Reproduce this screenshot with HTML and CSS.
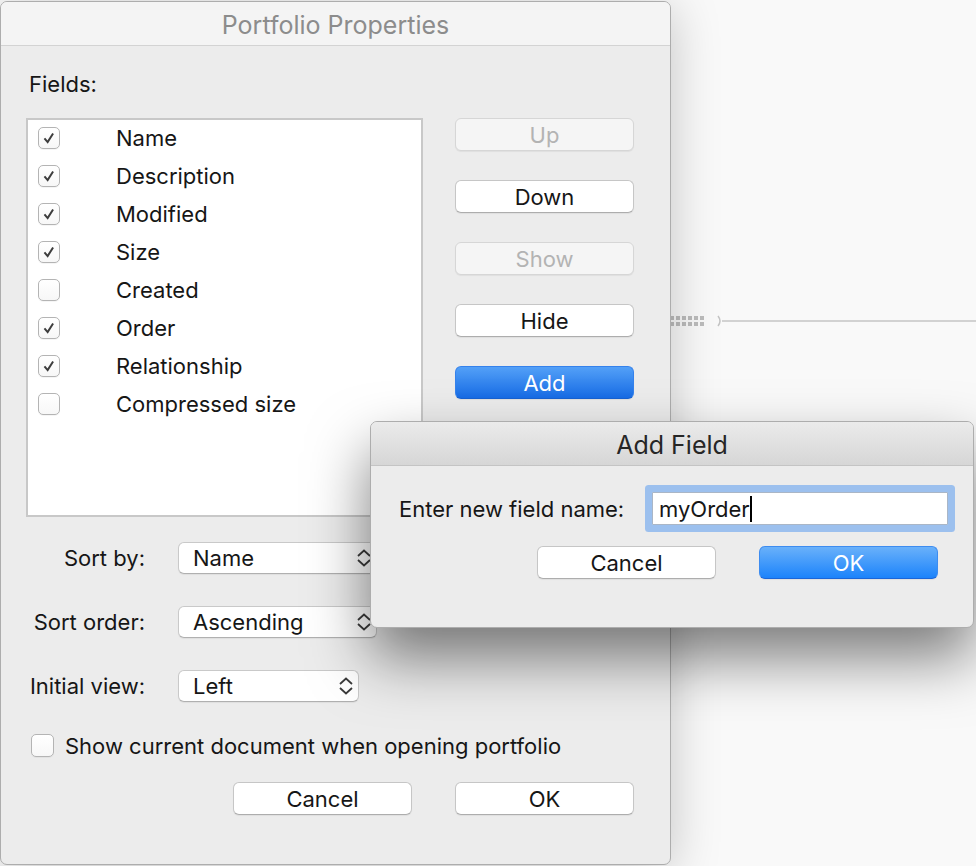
FILE: index.html
```html
<!DOCTYPE html>
<html lang="en">
<head>
    <meta charset="UTF-8">
    <title>Portfolio Properties</title>
    <link rel="stylesheet" href="styles.css">
</head>
<body>
    <div class="desktop">
        <svg class="connector" width="306" height="14" viewBox="0 0 306 14">
            <g fill="#bcbcbc">
                <rect x="0" y="2" width="4" height="4"/><rect x="6" y="2" width="4" height="4"/><rect x="12" y="2" width="4" height="4"/>
                <rect x="18" y="2" width="4" height="4"/><rect x="24" y="2" width="4" height="4"/><rect x="30" y="2" width="4" height="4"/>
                <rect x="0" y="8" width="4" height="4"/><rect x="6" y="8" width="4" height="4"/><rect x="12" y="8" width="4" height="4"/>
                <rect x="18" y="8" width="4" height="4"/><rect x="24" y="8" width="4" height="4"/><rect x="30" y="8" width="4" height="4"/>
            </g>
            <path d="M48 2 Q52 7 48 12" fill="none" stroke="#c4c4c4" stroke-width="1.5"/>
            <line x1="52" y1="7" x2="306" y2="7" stroke="#c4c4c4" stroke-width="1.5"/>
        </svg>

        <div class="window props">
            <div class="titlebar inactive">Portfolio Properties</div>
            <div class="content">
                <div class="fields-label">Fields:</div>

                <div class="fields-row">
                    <div class="field-list">
                        <div class="field-item"><span class="check on"><svg viewBox="0 0 22 22"><path d="M6 11.5 L9.5 15.5 L15.5 6"/></svg></span><span class="field-name">Name</span></div>
                        <div class="field-item"><span class="check on"><svg viewBox="0 0 22 22"><path d="M6 11.5 L9.5 15.5 L15.5 6"/></svg></span><span class="field-name">Description</span></div>
                        <div class="field-item"><span class="check on"><svg viewBox="0 0 22 22"><path d="M6 11.5 L9.5 15.5 L15.5 6"/></svg></span><span class="field-name">Modified</span></div>
                        <div class="field-item"><span class="check on"><svg viewBox="0 0 22 22"><path d="M6 11.5 L9.5 15.5 L15.5 6"/></svg></span><span class="field-name">Size</span></div>
                        <div class="field-item"><span class="check"></span><span class="field-name">Created</span></div>
                        <div class="field-item"><span class="check on"><svg viewBox="0 0 22 22"><path d="M6 11.5 L9.5 15.5 L15.5 6"/></svg></span><span class="field-name">Order</span></div>
                        <div class="field-item"><span class="check on"><svg viewBox="0 0 22 22"><path d="M6 11.5 L9.5 15.5 L15.5 6"/></svg></span><span class="field-name">Relationship</span></div>
                        <div class="field-item"><span class="check"></span><span class="field-name">Compressed size</span></div>
                    </div>

                    <div class="side-buttons">
                        <div class="btn disabled">Up</div>
                        <div class="btn">Down</div>
                        <div class="btn disabled">Show</div>
                        <div class="btn">Hide</div>
                        <div class="btn default dim">Add</div>
                    </div>
                </div>

                <div class="options">
                    <div class="opt-label">Sort by:</div>
                    <div class="popup wide">Name
                        <svg class="chev" viewBox="0 0 14 22"><path d="M1 9 L7 3.5 L13 9 M1 13 L7 18.5 L13 13"/></svg>
                    </div>
                    <div class="opt-label">Sort order:</div>
                    <div class="popup wide">Ascending
                        <svg class="chev" viewBox="0 0 14 22"><path d="M1 9 L7 3.5 L13 9 M1 13 L7 18.5 L13 13"/></svg>
                    </div>
                    <div class="opt-label">Initial view:</div>
                    <div class="popup narrow">Left
                        <svg class="chev" viewBox="0 0 14 22"><path d="M1 9 L7 3.5 L13 9 M1 13 L7 18.5 L13 13"/></svg>
                    </div>
                </div>

                <div class="check-row">
                    <span class="check big"></span>
                    <span>Show current document when opening portfolio</span>
                </div>

                <div class="actions">
                    <div class="btn">Cancel</div>
                    <div class="btn">OK</div>
                </div>
            </div>
        </div>

        <div class="window sheet">
            <div class="titlebar">Add Field</div>
            <div class="sheet-body">
                <div class="name-row">
                    <span>Enter new field name:</span>
                    <div class="text-field"><span class="typed">myOrder</span></div>
                </div>
                <div class="actions">
                    <div class="btn">Cancel</div>
                    <div class="btn default">OK</div>
                </div>
            </div>
        </div>
    </div>
</body>
</html>
```

FILE: styles.css
```css
body {
    margin: 0;
    background: #f9f9f9;
    font-family: Inter, 'Liberation Sans', sans-serif;
    font-size: 22px;
    color: #161616;
}

.desktop {
    position: relative;
    width: 976px;
    height: 866px;
    overflow: hidden;
}

.connector {
    position: absolute;
    left: 670px;
    top: 314px;
}

.window {
    box-sizing: border-box;
    background: #ececec;
    border: 1px solid #adadad;
    border-radius: 7px;
}

.props {
    position: relative;
    margin-top: 1px;
    width: 671px;
    height: 864px;
    box-shadow: 0 6px 50px rgba(0,0,0,0.22);
}

.titlebar {
    box-sizing: border-box;
    height: 44px;
    padding-top: 3px;
    line-height: 41px;
    text-align: center;
    font-size: 25px;
    color: #262626;
    border-bottom: 1px solid #c4c4c4;
    border-radius: 6px 6px 0 0;
    background: linear-gradient(#ebebeb, #d6d6d6);
}

.titlebar.inactive {
    color: #8c8c8c;
    background: #f4f4f4;
    border-bottom-color: #d3d3d3;
}

.content {
    padding: 0 36px 0 25px;
}

.fields-label {
    margin: 25px 0 0 3px;
    line-height: 26px;
}

.fields-row {
    display: flex;
    margin-top: 21px;
}

.field-list {
    box-sizing: border-box;
    width: 398px;
    height: 399px;
    padding-top: 0;
    background: white;
    border: 2px solid #c8c8c8;
}

.field-item {
    display: flex;
    align-items: center;
    height: 38px;
    margin-top: -1px;
    margin-bottom: 1px;
}

.check {
    box-sizing: border-box;
    width: 22px;
    height: 22px;
    margin-left: 10px;
    border: 1px solid #b4b4b4;
    border-radius: 5px;
    background: linear-gradient(#ffffff, #f7f7f7);
    box-shadow: 0 1px 0 rgba(0,0,0,0.04);
}

.check svg {
    display: block;
    width: 20px;
    height: 20px;
    fill: none;
    stroke: #3d3d3d;
    stroke-width: 2.2;
}

.field-name {
    margin-left: 56px;
}

.side-buttons {
    display: flex;
    flex-direction: column;
    gap: 29px;
    margin-left: 32px;
}

.btn {
    box-sizing: border-box;
    width: 179px;
    height: 33px;
    line-height: 33px;
    text-align: center;
    background: white;
    border: 1px solid #c6c6c6;
    border-bottom-color: #adadad;
    border-radius: 6px;
    box-shadow: 0 1px 1px rgba(0,0,0,0.06);
}

.btn.disabled {
    background: #f5f5f5;
    border-color: #d6d6d6;
    color: #b3b3b3;
}

.btn.default {
    color: white;
    border-color: #3d8cf0;
    border-bottom-color: #1b66d8;
    background: linear-gradient(#69b1fa, #1c83fb);
}

.btn.default.dim {
    border-color: #3582ec;
    border-bottom-color: #1762d3;
    background: linear-gradient(#53a0f7, #176ce6);
}

.options {
    display: grid;
    grid-template-columns: 119px auto;
    justify-content: start;
    align-items: center;
    column-gap: 33px;
    row-gap: 32px;
    margin-top: 25px;
}

.opt-label {
    text-align: right;
}

.popup {
    box-sizing: border-box;
    display: flex;
    align-items: center;
    justify-content: space-between;
    height: 32px;
    padding: 0 5px 0 14px;
    background: white;
    border: 1px solid #c9c9c9;
    border-bottom-color: #b0b0b0;
    border-radius: 6px;
    box-shadow: 0 1px 1px rgba(0,0,0,0.06);
}

.popup.wide {
    width: 199px;
}

.popup.narrow {
    width: 181px;
}

.chev {
    width: 14px;
    height: 22px;
    fill: none;
    stroke: #3a3a3a;
    stroke-width: 1.8;
}

.check-row {
    display: flex;
    align-items: center;
    gap: 11px;
    margin-top: 32px;
    margin-left: 5px;
    height: 23px;
}

.check.big {
    width: 23px;
    height: 23px;
    margin-left: 0;
}

.actions {
    display: flex;
    justify-content: flex-end;
    gap: 43px;
    margin-top: 25px;
}

.sheet {
    position: absolute;
    left: 370px;
    top: 421px;
    width: 604px;
    height: 207px;
    box-shadow: 0 30px 60px rgba(0,0,0,0.5);
}

.sheet-body {
    padding: 0 35px 0 28px;
}

.name-row {
    display: flex;
    align-items: center;
    justify-content: space-between;
    margin-top: 26px;
    margin-right: -10px;
}

.text-field {
    box-sizing: border-box;
    width: 296px;
    height: 33px;
    padding-left: 6px;
    line-height: 33px;
    background: white;
    border: 1px solid #aab6c6;
    border-radius: 1px;
    box-shadow: 0 0 0 7px #9cc0ee;
}

.typed {
    border-right: 2px solid #000;
}

.sheet .actions {
    margin-top: 21px;
}
```
